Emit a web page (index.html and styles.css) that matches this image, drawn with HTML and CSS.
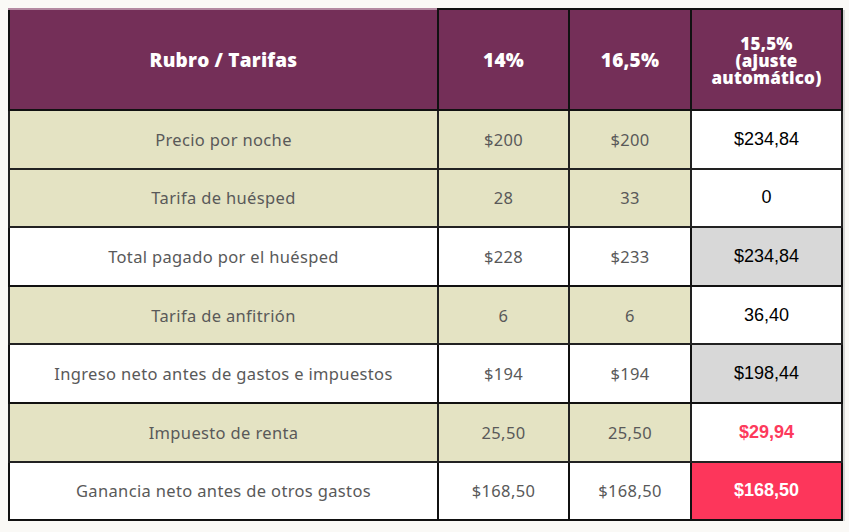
FILE: index.html
```html
<!DOCTYPE html>
<html lang="es">
<head>
<meta charset="utf-8">
<title>Rubro / Tarifas</title>
<link rel="stylesheet" href="styles.css">
</head>
<body>
<table class="rates">
  <colgroup>
    <col class="c-label">
    <col class="c-a">
    <col class="c-b">
    <col class="c-auto">
  </colgroup>
  <thead>
    <tr>
      <th class="first">Rubro / Tarifas</th>
      <th>14%</th>
      <th>16,5%</th>
      <th class="tight">15,5%<br>(ajuste<br>automático)</th>
    </tr>
  </thead>
  <tbody>
    <tr class="beige">
      <td>Precio por noche</td><td>$200</td><td>$200</td><td class="auto">$234,84</td>
    </tr>
    <tr class="beige">
      <td>Tarifa de huésped</td><td>28</td><td>33</td><td class="auto">0</td>
    </tr>
    <tr>
      <td>Total pagado por el huésped</td><td>$228</td><td>$233</td><td class="auto gray">$234,84</td>
    </tr>
    <tr class="beige">
      <td>Tarifa de anfitrión</td><td>6</td><td>6</td><td class="auto">36,40</td>
    </tr>
    <tr>
      <td>Ingreso neto antes de gastos e impuestos</td><td>$194</td><td>$194</td><td class="auto gray">$198,44</td>
    </tr>
    <tr class="beige">
      <td>Impuesto de renta</td><td>25,50</td><td>25,50</td><td class="auto red-text">$29,94</td>
    </tr>
    <tr>
      <td>Ganancia neto antes de otros gastos</td><td>$168,50</td><td>$168,50</td><td class="auto red-fill">$168,50</td>
    </tr>
  </tbody>
</table>
</body>
</html>
```

FILE: styles.css
```css
html, body {
  margin: 0;
  padding: 0;
  background: #faf9f6;
}
body {
  padding: 8px 0 0 8px;
}
.rates {
  border-collapse: collapse;
  table-layout: fixed;
  width: 833px;
  box-shadow: 2px 2px 0 #d8d8d6;
}
.c-label { width: 429px; }
.c-a { width: 131px; }
.c-b { width: 122px; }
.c-auto { width: 151px; }

.rates th,
.rates td {
  border: 2px solid #111;
  text-align: center;
  padding: 0;
}
.rates th {
  background: #742f58;
  color: #fff;
  height: 98px;
  font-family: "Open Sans", "Noto Sans", sans-serif;
  font-weight: 800;
  font-size: 19px;
  letter-spacing: 0.2px;
}
.rates th.first {
  border-top-color: #b48aa2;
}
.rates th.tight {
  font-size: 17px;
  line-height: 17px;
  padding-top: 1px;
}
.rates td {
  height: 56.6px;
  background: #fff;
  color: #595959;
  font-family: "Noto Sans", "Open Sans", sans-serif;
  font-size: 16.5px;
  letter-spacing: 0.35px;
}
.rates tr.beige td {
  background: #e4e3c3;
  border-color: #222;
}
.rates td.auto {
  background: #fff;
  color: #000;
  font-family: "Liberation Sans", Arial, sans-serif;
  font-size: 18px;
  letter-spacing: 0;
}
.rates tr.beige td.auto {
  background: #fff;
}
.rates td.auto.gray {
  background: #d8d8d8;
}
.rates td.auto.red-text {
  color: #fd3a5c;
  font-weight: 700;
}
.rates td.auto.red-fill {
  background: #fd365b;
  color: #fff;
  font-weight: 700;
}
```
